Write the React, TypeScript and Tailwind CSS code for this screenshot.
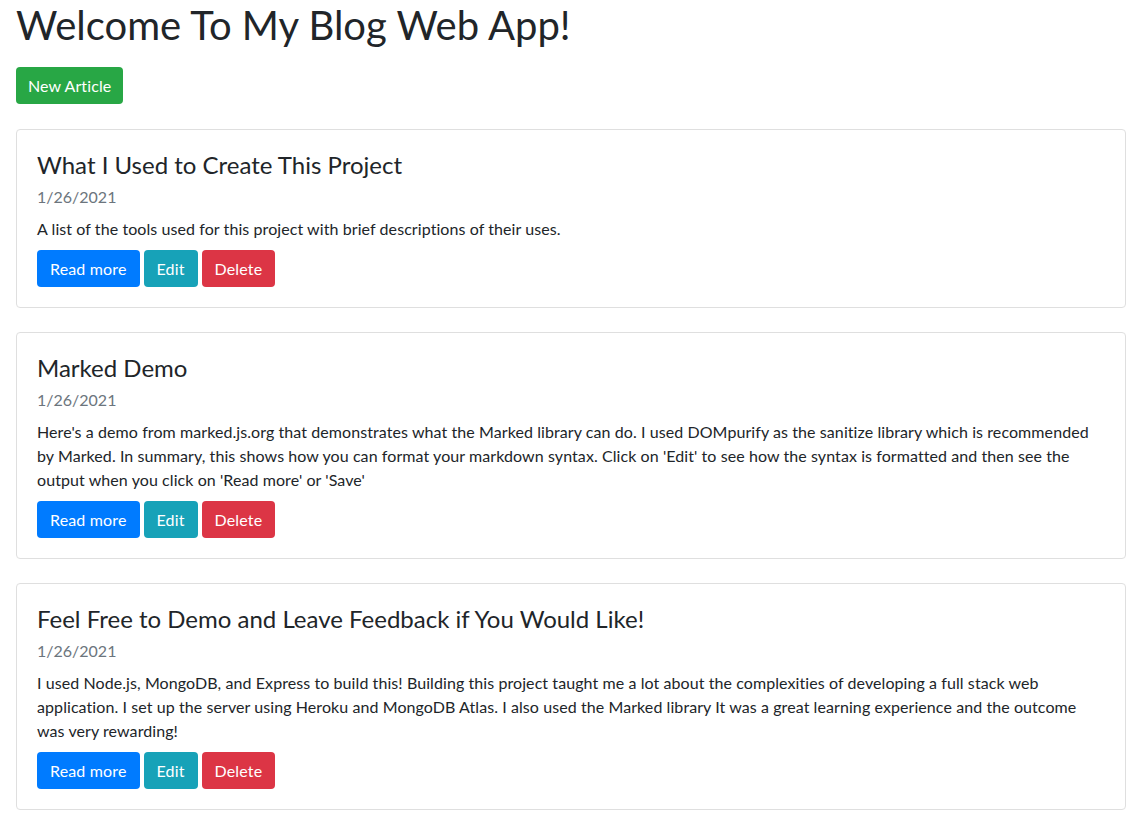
const articles = [
  {
    title: "What I Used to Create This Project",
    date: "1/26/2021",
    text: "A list of the tools used for this project with brief descriptions of their uses.",
  },
  {
    title: "Marked Demo",
    date: "1/26/2021",
    text: "Here's a demo from marked.js.org that demonstrates what the Marked library can do. I used DOMpurify as the sanitize library which is recommended by Marked. In summary, this shows how you can format your markdown syntax. Click on 'Edit' to see how the syntax is formatted and then see the output when you click on 'Read more' or 'Save'",
  },
  {
    title: "Feel Free to Demo and Leave Feedback if You Would Like!",
    date: "1/26/2021",
    text: "I used Node.js, MongoDB, and Express to build this! Building this project taught me a lot about the complexities of developing a full stack web application. I set up the server using Heroku and MongoDB Atlas. I also used the Marked library It was a great learning experience and the outcome was very rewarding!",
  },
];

function Btn({ color, children }: { color: string; children: React.ReactNode }) {
  return (
    <a href="#" className={`inline-flex h-[37px] items-center rounded px-[13px] text-base tracking-[0.15px] text-white ${color}`}>
      {children}
    </a>
  );
}

export default function App() {
  return (
    <div className="min-h-screen bg-white pl-4 text-[#212529]" style={{ fontFamily: "Lato, 'Open Sans', sans-serif" }}>
      <h1 className="pt-[1px] text-[40px] leading-[48px] font-normal">Welcome To My Blog Web App!</h1>
      <div className="mt-[18px] mb-[25px]">
        <a href="#" className="inline-flex h-[37px] items-center rounded bg-[#28a745] px-3 text-base tracking-[0.1px] text-white">
          New Article
        </a>
      </div>
      <div className="flex w-[1110px] flex-col gap-[24px]">
        {articles.map((a) => (
          <div key={a.title} className="rounded border border-[#dfdfdf] p-5">
            <h4 className="text-[24px] leading-[29px]">{a.title}</h4>
            <div className="mt-[6px] mb-2 text-base leading-6 text-[#6c757d]">{a.date}</div>
            <p className="mb-[9px] text-base leading-6 tracking-[0.08px]">{a.text}</p>
            <div className="flex gap-1">
              <Btn color="bg-[#007bff]">Read more</Btn>
              <Btn color="bg-[#17a2b8]">Edit</Btn>
              <Btn color="bg-[#dc3545]">Delete</Btn>
            </div>
          </div>
        ))}
      </div>
    </div>
  );
}
